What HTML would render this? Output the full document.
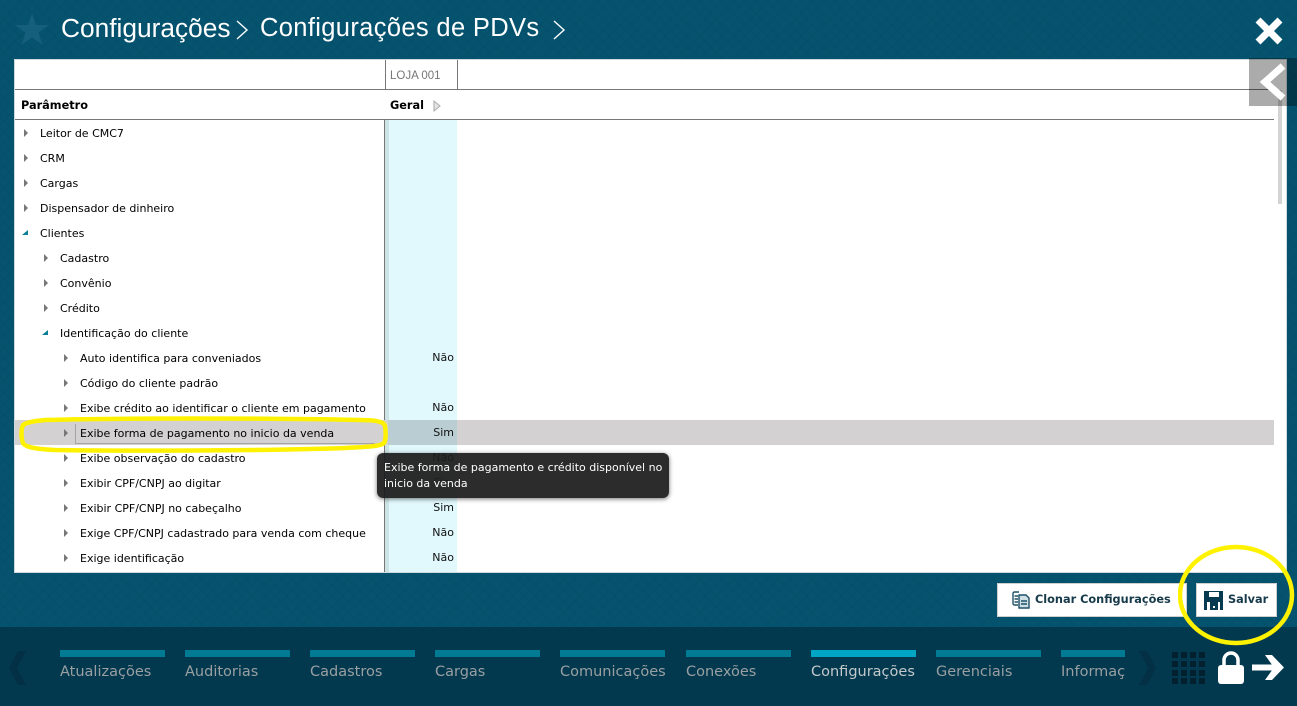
<!DOCTYPE html>
<html lang="pt"><head><meta charset="utf-8"><title>Configurações de PDVs</title>
<style>
html,body{margin:0;padding:0}
body{width:1297px;height:706px;overflow:hidden;position:relative;font-family:"DejaVu Sans","Liberation Sans",sans-serif;background:#05536f}
div,span,svg{position:absolute}
#bg{left:0;top:0;width:1297px;height:627px;background-color:#05536f;background-image:repeating-linear-gradient(45deg,rgba(0,0,0,.035) 0 1px,transparent 1px 8px),repeating-linear-gradient(-45deg,rgba(0,0,0,.035) 0 1px,transparent 1px 8px)}
.t{font-family:"Liberation Sans",sans-serif;color:#fff;font-size:25.5px;white-space:nowrap;line-height:30px;top:13px}
#panel{left:15px;top:60px;width:1271px;height:512px;background:#fff;outline:1px solid #cfd8da}
.r{font-size:11px;color:#000;white-space:nowrap;line-height:14px}
.v{font-size:11px;color:#111;white-space:nowrap;line-height:14px;right:843px}
.tab{height:7px;width:105px;top:650px;background:#007b93}
.lab{top:663px;font-size:14.5px;line-height:18px;color:#9a9fa2;white-space:nowrap}
.btn{background:#fff;border:1px solid #cfcfcf;box-sizing:border-box}
</style></head><body>
<div id="bg"></div>
<svg style="left:15px;top:13px" width="34" height="32" viewBox="0 0 34 32"><path d="M17 0l4 12h13l-10.500 7.500 4 12.500-10.500-7.500-10.500 7.500 4-12.500L0 12h13z" fill="#155e7c"/></svg>
<div class="t" style="left:61px;font-size:26.3px">Configurações</div>
<svg style="left:235px;top:20px" width="14" height="20"><path d="M2 1l10 9-10 9" fill="none" stroke="#fff" stroke-width="1.400"/></svg>
<div class="t" style="left:260px;letter-spacing:.35px">Configurações de PDVs</div>
<svg style="left:552px;top:20px" width="14" height="20"><path d="M2 1l10 9-10 9" fill="none" stroke="#fff" stroke-width="1.400"/></svg>
<svg style="left:1255px;top:17px" width="28" height="28"><path d="M3 3l22 22M25 3L3 25" stroke="#fff" stroke-width="7" fill="none"/></svg>

<div id="panel"></div>
<div style="left:15px;top:89px;width:1255px;height:1px;background:#777"></div>
<div style="left:15px;top:119px;width:1259px;height:1px;background:#777"></div>
<div style="left:385px;top:60px;width:1px;height:30px;background:#777"></div>
<div style="left:457px;top:60px;width:1px;height:30px;background:#777"></div>
<div style="left:390px;top:69px;font:11.500px/14px 'Liberation Sans',sans-serif;color:#777">LOJA 001</div>
<div class="r" style="left:21px;top:99px;font-weight:bold;font-size:11.3px">Parâmetro</div>
<div class="r" style="left:390px;top:99px;font-weight:bold;font-size:11.3px">Geral</div>
<svg style="left:433px;top:100px" width="9" height="12"><path d="M1 1l6 5-6 5z" fill="#e4e4e4" stroke="#aaa"/></svg>

<div style="left:384px;top:120px;width:1px;height:452px;background:#777"></div>
<div style="left:385px;top:120px;width:4px;height:452px;background:#cde4e6"></div>
<div style="left:389px;top:120px;width:68px;height:452px;background:#e1f9fd"></div>
<div style="left:15px;top:420px;width:1259px;height:25px;background:#d3d1d2"></div>
<div style="left:388px;top:420px;width:69px;height:25px;background:#b9cdd2"></div>
<div style="left:75px;top:424px;width:1px;height:20px;background:#a5a5a5"></div>
<div style="left:75px;top:443px;width:300px;height:1px;background:#a5a5a5"></div>

<svg style="left:0;top:120px" width="100" height="452" fill="#777">
<path d="M24 9l4 4-4 4zM24 34l4 4-4 4zM24 59l4 4-4 4zM24 84l4 4-4 4zM44 134l4 4-4 4zM44 159l4 4-4 4zM44 184l4 4-4 4zM64 234l4 4-4 4zM64 259l4 4-4 4zM64 284l4 4-4 4zM64 309l4 4-4 4zM64 334l4 4-4 4zM64 359l4 4-4 4zM64 384l4 4-4 4zM64 409l4 4-4 4zM64 434l4 4-4 4z"/>
<path d="M22 115l6-5v5zM42 215l6-5v5z" fill="#0a7f96"/>
</svg>

<div class="r" style="left:40px;top:127px">Leitor de CMC7</div>
<div class="r" style="left:40px;top:152px">CRM</div>
<div class="r" style="left:40px;top:177px">Cargas</div>
<div class="r" style="left:40px;top:202px">Dispensador de dinheiro</div>
<div class="r" style="left:40px;top:227px">Clientes</div>
<div class="r" style="left:60px;top:252px">Cadastro</div>
<div class="r" style="left:60px;top:277px">Convênio</div>
<div class="r" style="left:60px;top:302px">Crédito</div>
<div class="r" style="left:60px;top:327px">Identificação do cliente</div>
<div class="r" style="left:80px;top:352px">Auto identifica para conveniados</div>
<div class="r" style="left:80px;top:377px">Código do cliente padrão</div>
<div class="r" style="left:80px;top:402px">Exibe crédito ao identificar o cliente em pagamento</div>
<div class="r" style="left:80px;top:427px">Exibe forma de pagamento no inicio da venda</div>
<div class="r" style="left:80px;top:452px">Exibe observação do cadastro</div>
<div class="r" style="left:80px;top:477px">Exibir CPF/CNPJ ao digitar</div>
<div class="r" style="left:80px;top:502px">Exibir CPF/CNPJ no cabeçalho</div>
<div class="r" style="left:80px;top:527px">Exige CPF/CNPJ cadastrado para venda com cheque</div>
<div class="r" style="left:80px;top:552px">Exige identificação</div>

<div class="v" style="top:351px">Não</div>
<div class="v" style="top:401px">Não</div>
<div class="v" style="top:426px">Sim</div>
<div class="v" style="top:451px">Não</div>
<div class="v" style="top:476px">Sim</div>
<div class="v" style="top:501px">Sim</div>
<div class="v" style="top:526px">Não</div>
<div class="v" style="top:551px">Não</div>

<svg style="left:15px;top:414px" width="380" height="40"><path d="M30 6C100 4 250 4 345 6c17 0 24 2 25 6 1 6 1 14-1 17-4 4-24 4-39 5-80 3-230 3-290 2-20-1-30-3-32-7-2-5-2-14 0-18 4-3 12-4 22-5z" fill="none" stroke="#fff200" stroke-width="4.500"/></svg>

<div style="left:377px;top:453px;width:292px;height:45px;background:rgba(28,28,28,.93);border-radius:6px;box-shadow:0 1px 5px rgba(0,0,0,.55)"></div>
<div style="left:384px;top:460px;font-size:11px;line-height:16px;color:#fff;white-space:nowrap">Exibe forma de pagamento e crédito disponível no<br>inicio da venda</div>

<div style="left:1278px;top:90px;width:4px;height:114px;background:#d4d4d4"></div>
<div style="left:1249px;top:58px;width:48px;height:48px;background:rgba(0,0,0,.33)"></div>
<svg style="left:1258px;top:63px" width="30" height="38"><path d="M25 3L7 19l18 16" fill="none" stroke="#fff" stroke-width="7"/></svg>

<div class="btn" style="left:997px;top:583px;width:190px;height:34px"></div>
<svg style="left:1011px;top:590px" width="20" height="20" fill="none" stroke="#1f5068" stroke-width="1.400"><path d="M8 2H3.500A1.500 1.500 0 0 0 2 3.500v10A1.500 1.500 0 0 0 3.500 15H7"/><path d="M8 5h7l3 3v10H8z" fill="#cfe0e5"/><path d="M10 11h6M10 14h6" /><path d="M3.500 6H7M3.500 9H7M3.500 12H7"/></svg>
<div style="left:1035px;top:593px;font:bold 11.3px/14px 'DejaVu Sans',sans-serif;color:#163a4a;white-space:nowrap">Clonar Configurações</div>
<div class="btn" style="left:1196px;top:583px;width:81px;height:34px"></div>
<svg style="left:1204px;top:591px" width="19" height="19"><path d="M0 0h19v19H0z" fill="#063a50"/><path d="M5 1h10v5H5zM3 11h13v8H3z" fill="#fff"/><path d="M6 11h8v8H6z" fill="#063a50"/><path d="M9 15h2v2H9z" fill="#fff"/></svg>
<div style="left:1228px;top:593px;font:bold 11.3px/14px 'DejaVu Sans',sans-serif;color:#163a4a">Salvar</div>

<div style="left:0;top:627px;width:1297px;height:79px;background:#02394f"></div>
<svg style="left:1178px;top:544px" width="118" height="104"><ellipse cx="58" cy="51" rx="56" ry="48" fill="none" stroke="#fff200" stroke-width="4.500"/></svg>

<svg style="left:8px;top:651px" width="20" height="34"><path d="M17 0L8 17l9 17H9L0 17 9 0z" fill="#033044" transform="translate(1)"/></svg>
<div class="tab" style="left:60px"></div><div class="lab" style="left:60px">Atualizações</div>
<div class="tab" style="left:185px"></div><div class="lab" style="left:185px">Auditorias</div>
<div class="tab" style="left:310px"></div><div class="lab" style="left:310px">Cadastros</div>
<div class="tab" style="left:435px"></div><div class="lab" style="left:435px">Cargas</div>
<div class="tab" style="left:560px"></div><div class="lab" style="left:560px">Comunicações</div>
<div class="tab" style="left:686px"></div><div class="lab" style="left:686px">Conexões</div>
<div class="tab" style="left:811px;background:#00a6c4"></div><div class="lab" style="left:811px;color:#c3c8ca">Configurações</div>
<div class="tab" style="left:936px"></div><div class="lab" style="left:936px">Gerenciais</div>
<div class="tab" style="left:1061px;width:64px"></div><div class="lab" style="left:1061px;width:64px;overflow:hidden">Informações</div>
<svg style="left:1139px;top:651px" width="18" height="34"><path d="M0 0h8l9 17-9 17H0l9-17z" fill="#033044"/></svg>
<svg style="left:1172px;top:652px" width="33" height="32" fill="#03202f">
<path d="M0 0h6v6H0zM9 0h6v6H9zM18 0h6v6h-6zM27 0h6v6h-6zM0 9h6v6H0zM9 9h6v6H9zM18 9h6v6h-6zM27 9h6v6h-6zM0 18h6v6H0zM9 18h6v6H9zM18 18h6v6h-6zM27 18h6v6h-6zM0 26h6v6H0zM9 26h6v6H9zM18 26h6v6h-6zM27 26h6v6h-6z"/></svg>
<svg style="left:1217px;top:651px" width="28" height="33"><path d="M7 15V9a7 7 0 0 1 14 0v6" fill="none" stroke="#fff" stroke-width="3.500"/><rect x="1" y="14" width="26" height="19" rx="3" fill="#fff"/></svg>
<svg style="left:1252px;top:655px" width="33" height="25"><path d="M0 9.500h22V15.500H0z" fill="#fff"/><path d="M13 0h7l12 12.500L20 25h-7l9-12.500z" fill="#fff"/></svg>
</body></html>
